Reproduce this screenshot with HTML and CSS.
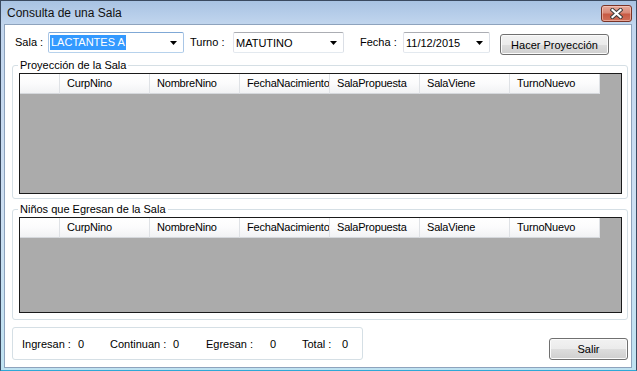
FILE: index.html
```html
<!DOCTYPE html>
<html lang="es">
<head>
  <meta charset="UTF-8">
  <title>Consulta de una Sala</title>
  <link rel="stylesheet" href="styles.css">
</head>
<body>
  <div class="window">
    <div class="titlebar">
      <span class="title">Consulta de una Sala</span>
      <button class="close-btn">
        <svg width="13" height="11" viewBox="0 0 13 11">
          <path d="M2.5 2 L10.5 9 M10.5 2 L2.5 9" stroke="#3c3c3c" stroke-width="4.2" stroke-linecap="square"/>
          <path d="M2.5 2 L10.5 9 M10.5 2 L2.5 9" stroke="#fff" stroke-width="2.2" stroke-linecap="square"/>
        </svg>
      </button>
    </div>

    <div class="client">
      <div class="toolbar">
        <span class="lbl lbl-sala">Sala :</span>
        <div class="combo combo-sala focused">
          <span class="sel">LACTANTES A</span>
          <svg class="arrow" width="7" height="4" viewBox="0 0 7 4"><polygon points="0,0 7,0 3.5,4" fill="#000"/></svg>
        </div>
        <span class="lbl lbl-turno">Turno :</span>
        <div class="combo combo-turno">
          <span class="val">MATUTINO</span>
          <svg class="arrow" width="7" height="4" viewBox="0 0 7 4"><polygon points="0,0 7,0 3.5,4" fill="#000"/></svg>
        </div>
        <span class="lbl lbl-fecha">Fecha :</span>
        <div class="combo combo-fecha">
          <span class="val">11/12/2015</span>
          <svg class="arrow" width="7" height="4" viewBox="0 0 7 4"><polygon points="0,0 7,0 3.5,4" fill="#000"/></svg>
        </div>
        <button class="btn btn-proj">Hacer Proyección</button>
      </div>

      <fieldset class="group group-proj">
        <legend>Proyección de la Sala</legend>
        <div class="grid grid-proj">
          <div class="grid-head">
            <div class="hcell corner"></div>
            <div class="hcell">CurpNino</div>
            <div class="hcell">NombreNino</div>
            <div class="hcell">FechaNacimiento</div>
            <div class="hcell">SalaPropuesta</div>
            <div class="hcell">SalaViene</div>
            <div class="hcell">TurnoNuevo</div>
          </div>
        </div>
      </fieldset>

      <fieldset class="group group-egresan">
        <legend>Niños que Egresan de la Sala</legend>
        <div class="grid grid-egresan">
          <div class="grid-head">
            <div class="hcell corner"></div>
            <div class="hcell">CurpNino</div>
            <div class="hcell">NombreNino</div>
            <div class="hcell">FechaNacimiento</div>
            <div class="hcell">SalaPropuesta</div>
            <div class="hcell">SalaViene</div>
            <div class="hcell">TurnoNuevo</div>
          </div>
        </div>
      </fieldset>

      <div class="footer">
        <div class="totals">
          <span class="t-lbl w-ingresan">Ingresan :</span><span class="t-val">0</span>
          <span class="t-lbl w-continuan">Continuan :</span><span class="t-val w-33">0</span>
          <span class="t-lbl w-egresan">Egresan :</span><span class="t-val">0</span>
          <span class="t-lbl w-total">Total :</span><span class="t-val last">0</span>
        </div>
        <button class="btn btn-salir">Salir</button>
      </div>
    </div>
  </div>
</body>
</html>
```

FILE: styles.css
```css
body {
  margin: 0;
  font-family: "Liberation Sans", Arial, sans-serif;
  font-size: 11px;
  color: #000;
  background: #fff;
}

/* window frame */
.window {
  width: 637px;
  height: 371px;
  box-sizing: border-box;
  display: flex;
  flex-direction: column;
  padding: 0 4px 2px 3px;
  border: 1px solid #3a4a60;
  border-bottom-color: #2ea8d6;
  background: linear-gradient(#a8c3e3 0, #c2d6ee 24px, #cddff2 55%, #bfe2f1 100%);
}

.titlebar {
  height: 23px;
  display: flex;
  align-items: flex-start;
  padding-left: 3px;
}

.title {
  margin-top: 5px;
  font-size: 12px;
  line-height: 14px;
  color: #111;
}

.close-btn {
  margin: 4px 0 0 auto;
  width: 31px;
  height: 17px;
  padding: 0;
  display: flex;
  align-items: center;
  justify-content: center;
  border: 1px solid #7a3427;
  border-radius: 3px;
  background: linear-gradient(#e6aa9c 0%, #d98a78 45%, #c85a44 55%, #d0705a 100%);
  box-shadow: inset 0 0 0 1px rgba(255, 220, 210, 0.5);
}

/* client area */
.client {
  flex: 1;
  display: flex;
  flex-direction: column;
  padding-left: 7px;
  background: #fff;
  border: 1px solid #8ea3bd;
}

.toolbar {
  display: flex;
  align-items: center;
  height: 21px;
  margin-top: 7px;
  padding-left: 3px;
}

.lbl { line-height: 13px; }
.lbl-sala { width: 33px; }
.lbl-turno { width: 43px; margin-left: 6px; }
.lbl-fecha { width: 43px; margin-left: 16px; }

.combo {
  box-sizing: border-box;
  height: 21px;
  display: flex;
  align-items: center;
  justify-content: space-between;
  padding: 0 6px 0 2px;
  border: 1px solid;
  border-color: #abadb3 #dbdfe6 #e3e9ef #e2e3ea;
  border-radius: 2px;
  background: #fff;
}
.combo.focused {
  border-color: #7fa8d6 #a9c6e6 #b7d2ec #a9c6e6;
  padding-left: 1px;
}
.combo-sala { width: 136px; }
.combo-turno { width: 111px; }
.combo-fecha { width: 87px; }

.combo .sel {
  background: #3399ff;
  color: #fff;
  padding: 0 1px;
  line-height: 15px;
}

.btn {
  box-sizing: border-box;
  padding: 0;
  font-family: inherit;
  font-size: 11px;
  color: #000;
  border: 1px solid #707070;
  border-radius: 3px;
  background: linear-gradient(#f2f2f2 0%, #ebebeb 50%, #dddddd 51%, #cfcfcf 100%);
  box-shadow: inset 0 0 0 1px #fbfbfb;
}
.btn-proj {
  width: 109px;
  height: 21px;
  margin: 4px 0 0 10px;
}
.btn-salir {
  width: 79px;
  height: 22px;
}

/* group boxes */
.group {
  box-sizing: border-box;
  width: 616px;
  margin: 0;
  padding: 2px 5px 4px 6px;
  border: 1px solid #d5dfe5;
  border-radius: 3px;
  min-inline-size: 0;
}
.group legend {
  padding: 0 2px;
  margin-left: -1px;
  font-size: 11px;
  line-height: 12px;
}
.group-proj { margin-top: 6px; }
.group-egresan { margin-top: 4px; padding-bottom: 6px; }

.grid {
  box-sizing: border-box;
  border: 1px solid #1a1a1a;
  background: #ababab;
}
.grid-proj { height: 121px; }
.grid-egresan { height: 96px; }

.grid-head {
  display: flex;
  width: 580px;
  height: 20px;
}
.hcell {
  box-sizing: border-box;
  width: 90px;
  height: 20px;
  padding-left: 7px;
  line-height: 19px;
  white-space: nowrap;
  overflow: hidden;
  letter-spacing: -0.2px;
  background: linear-gradient(#ffffff 0%, #fbfbfc 50%, #f1f2f4 100%);
  border-right: 1px solid #dfe2e6;
  border-bottom: 1px solid #d5d8dc;
}
.hcell.corner { width: 40px; }

/* footer */
.footer {
  width: 616px;
  display: flex;
  align-items: flex-end;
  justify-content: space-between;
  margin-top: 7px;
}
.totals {
  box-sizing: border-box;
  width: 351px;
  height: 33px;
  display: flex;
  align-items: center;
  padding-left: 9px;
  border: 1px solid #d5dfe5;
  border-radius: 3px;
}
.t-lbl, .t-val {
  flex-shrink: 0;
  white-space: nowrap;
}
.w-ingresan { width: 56px; }
.w-continuan { width: 63px; }
.w-egresan { width: 64px; }
.w-total { width: 40px; }
.t-val { width: 32px; }
.t-val.w-33 { width: 33px; }
.t-val.last { width: auto; }
```
